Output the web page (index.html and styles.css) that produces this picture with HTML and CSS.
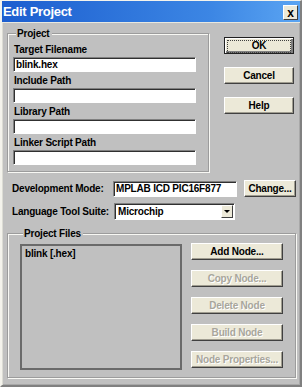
FILE: index.html
```html
<!DOCTYPE html>
<html lang="en">
<head>
    <meta charset="UTF-8">
    <title>Edit Project</title>
    <link rel="stylesheet" href="styles.css">
</head>
<body>

<div class="window">
    <div class="titlebar">
        <span class="title">Edit Project</span>
        <button class="close">x</button>
    </div>

    <div class="content">
        <div class="top">
            <fieldset class="group project">
                <legend>Project</legend>
                <label>Target Filename</label>
                <input class="field" type="text" value="blink.hex">
                <label>Include Path</label>
                <input class="field" type="text" value="">
                <label>Library Path</label>
                <input class="field" type="text" value="">
                <label>Linker Script Path</label>
                <input class="field" type="text" value="">
            </fieldset>

            <div class="side-buttons">
                <button class="btn default"><span>OK</span></button>
                <button class="btn">Cancel</button>
                <button class="btn">Help</button>
            </div>
        </div>

        <div class="row dev-row">
            <label class="row-label">Development Mode:</label>
            <input class="field mode" type="text" value="MPLAB ICD PIC16F877">
            <button class="btn change">Change...</button>
        </div>

        <div class="row lang-row">
            <label class="row-label">Language Tool Suite:</label>
            <div class="select">
                <span>Microchip</span>
                <span class="arrow"></span>
            </div>
        </div>

        <fieldset class="group files">
            <legend>Project Files</legend>
            <div class="listbox">
                <div class="item">blink [.hex]</div>
            </div>
            <div class="node-buttons">
                <button class="btn node">Add Node...</button>
                <button class="btn node" disabled>Copy Node...</button>
                <button class="btn node" disabled>Delete Node</button>
                <button class="btn node" disabled>Build Node</button>
                <button class="btn node" disabled>Node Properties...</button>
            </div>
        </fieldset>
    </div>
</div>

</body>
</html>
```

FILE: styles.css
```css
body {
    margin: 0;
    padding: 0;
    background-color: #c0c0c0;
    font-family: "Liberation Sans", Arial, sans-serif;
    font-size: 10px;
    font-weight: bold;
    letter-spacing: -0.2px;
    color: #000;
}

.window {
    width: 302px;
    height: 387px;
    box-sizing: border-box;
    background-color: #c0c0c0;
    border-left: 2px solid #f4f3ec;
    border-top: 1px solid #f4f3ec;
    border-right: 2px solid #808080;
    border-bottom: 2px solid #808080;
    box-shadow: inset 1px 0 #dcdcd4, inset -1px -1px #a8a8a8;
}

.titlebar {
    height: 21px;
    display: flex;
    align-items: center;
    justify-content: space-between;
    padding: 0 2px 0 1px;
    background: linear-gradient(to right, #1c5ecf, #3c86e4 70%, #5aa4f2);
    border-bottom: 1px solid #e8e8e0;
}

.title {
    color: #fff;
    font-size: 13px;
    letter-spacing: -0.3px;
}

.close {
    width: 15px;
    height: 15px;
    padding: 0;
    margin-top: 2px;
    font-family: "Liberation Sans", Arial, sans-serif;
    font-size: 12px;
    font-weight: bold;
    line-height: 12px;
    background-color: #ece9d8;
    border: 1px solid;
    border-color: #fff #404040 #404040 #fff;
}

.content {
    padding: 0 0 0 5px;
}

.group {
    margin: 0;
    border: 1px solid #9c9c9c;
    box-shadow: inset 1px 1px #f8f8f4, 1px 1px #f8f8f4;
}

.group legend {
    padding: 0 2px 0 1px;
    margin-left: 3px;
    line-height: 13px;
    background-color: #c0c0c0;
}

.top {
    display: flex;
    align-items: flex-start;
    margin-top: 4px;
}

.project {
    width: 202px;
    box-sizing: border-box;
    padding: 2px 0 5px 5px;
}

.project label {
    display: block;
    height: 15px;
    line-height: 15px;
    padding-left: 1px;
}

.field {
    display: block;
    box-sizing: border-box;
    height: 15px;
    margin: 0 0 1px 0;
    padding: 0 2px;
    font-family: inherit;
    font-size: 10px;
    font-weight: bold;
    letter-spacing: -0.2px;
    background-color: #fff;
    border: 1px solid;
    border-color: #808080 #fff #fff #808080;
    box-shadow: inset 1px 1px #303030;
    outline: none;
}

.project .field {
    width: 183px;
}

.side-buttons {
    display: flex;
    flex-direction: column;
    gap: 13px;
    margin: 10px 0 0 15px;
}

.btn {
    height: 17px;
    box-sizing: border-box;
    padding: 0;
    font-family: inherit;
    font-size: 10px;
    font-weight: bold;
    letter-spacing: -0.2px;
    color: #000;
    background-color: #ece9d8;
    border: 1px solid;
    border-color: #fff #404040 #404040 #fff;
    box-shadow: inset -1px -1px #a09d90;
}

.side-buttons .btn {
    width: 70px;
}

.btn.default {
    border-color: #202020;
    box-shadow: inset 1px 1px #fff, inset -2px -2px #808080;
    padding: 2px;
}

.btn.default span {
    display: block;
    height: 100%;
    line-height: 9px;
    border: 1px dotted #404040;
}

.btn:disabled {
    color: #a8a69c;
    text-shadow: 1px 1px #fff;
}

.row {
    display: flex;
    align-items: center;
}

.row-label {
    padding-left: 5px;
}

.dev-row {
    margin-top: 8px;
}

.dev-row .row-label {
    width: 101px;
}

.mode {
    width: 124px;
    height: 16px;
    margin: 0;
}

.change {
    width: 52px;
    margin-left: 7px;
}

.lang-row {
    margin-top: 6px;
}

.lang-row .row-label {
    width: 102px;
}

.select {
    width: 121px;
    height: 17px;
    box-sizing: border-box;
    display: flex;
    align-items: center;
    justify-content: space-between;
    padding: 0 1px 0 3px;
    background-color: #fff;
    border: 1px solid;
    border-color: #808080 #fff #fff #808080;
    box-shadow: inset 1px 1px #303030;
}

.arrow {
    width: 12px;
    height: 13px;
    box-sizing: border-box;
    position: relative;
    background-color: #ece9d8;
    border: 1px solid;
    border-color: #fff #404040 #404040 #fff;
}

.arrow::after {
    content: "";
    position: absolute;
    left: 2px;
    top: 4px;
    border-left: 3px solid transparent;
    border-right: 3px solid transparent;
    border-top: 3px solid #000;
}

.files {
    width: 289px;
    box-sizing: border-box;
    margin-top: 7px;
    display: flex;
    align-items: flex-start;
    padding: 4px 0 7px 12px;
}

.listbox {
    width: 162px;
    height: 126px;
    box-sizing: border-box;
    border: 2px solid #6a6a6a;
    padding: 2px 3px;
    background-color: #c0c0c0;
}

.node-buttons {
    display: flex;
    flex-direction: column;
    gap: 10px;
    margin-left: 9px;
    margin-top: -1px;
}

.btn.node {
    width: 92px;
}
```
